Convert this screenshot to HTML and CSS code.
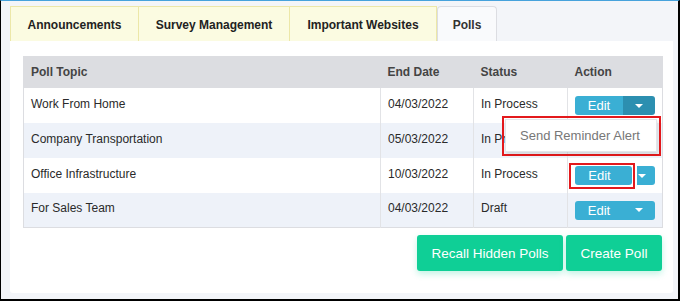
FILE: index.html
```html
<!DOCTYPE html>
<html>
<head>
<meta charset="utf-8">
<link rel="stylesheet" href="styles.css">
</head>
<body>
<div class="frame">
  <div class="tabs">
    <div class="tab t1">Announcements</div>
    <div class="tab t2">Survey Management</div>
    <div class="tab t3">Important Websites</div>
    <div class="tab active t4">Polls</div>
  </div>
  <div class="panel">
    <table class="polls">
      <colgroup>
        <col class="c1"><col class="c2"><col class="c3"><col class="c4">
      </colgroup>
      <thead>
        <tr><th>Poll Topic</th><th>End Date</th><th>Status</th><th>Action</th></tr>
      </thead>
      <tbody>
        <tr>
          <td>Work From Home</td><td>04/03/2022</td><td>In Process</td>
          <td class="act">
            <div class="split"><span class="edit">Edit</span><span class="caret open"><i></i></span></div>
            <div class="menu-box"><div class="menu">Send Reminder Alert</div></div>
          </td>
        </tr>
        <tr class="alt">
          <td>Company Transportation</td><td>05/03/2022</td><td>In Process</td>
          <td class="act">
            <div class="split"><span class="edit">Edit</span><span class="caret"><i></i></span></div>
          </td>
        </tr>
        <tr>
          <td>Office Infrastructure</td><td>10/03/2022</td><td>In Process</td>
          <td class="act">
            <div class="split wide"><span class="edit hl">Edit<b class="redbox"></b></span><span class="caret narrow"><i></i></span></div>
          </td>
        </tr>
        <tr class="alt">
          <td>For Sales Team</td><td>04/03/2022</td><td>Draft</td>
          <td class="act">
            <div class="split"><span class="edit">Edit</span><span class="caret"><i></i></span></div>
          </td>
        </tr>
      </tbody>
    </table>
    <div class="actions">
      <button class="btn recall">Recall Hidden Polls</button>
      <button class="btn create">Create Poll</button>
    </div>
  </div>
</div>
</body>
</html>
```
FILE: styles.css
```css
* { box-sizing: border-box; }
html, body { margin: 0; padding: 0; }
body { font-family: "Liberation Sans", Arial, sans-serif; background: #fff; }

.frame {
  width: 680px;
  height: 301px;
  background: #f3f5f9;
  border-top: 1px solid #46a2dc;
  border-left: 1px solid #000;
  border-right: 2px solid #000;
  border-bottom: 2px solid #000;
  padding: 5px 5px 0 9px;
  overflow: hidden;
}

.tabs { display: flex; height: 35px; }
.tab {
  display: flex;
  align-items: center;
  justify-content: center;
  font-size: 12px;
  font-weight: bold;
  color: #222;
  background: #fbfbe1;
  border: 1px solid #ece7a8;
  border-bottom: none;
  padding-top: 1px;
}
.tab + .tab { border-left: none; }
.t1 { width: 129px; }
.t2 { width: 151px; }
.t3 { width: 147px; }
.t4 { width: 60px; }
.tab.active {
  background: #f9fafc;
  border: 1px solid #dcdde2;
  border-bottom: none;
  border-radius: 4px 4px 0 0;
  color: #333;
}

.panel {
  background: #fff;
  height: 252px;
  border-radius: 0 0 3px 3px;
  padding: 15px 11px 0 13px;
}

.polls {
  width: 639px;
  border-collapse: collapse;
  table-layout: fixed;
  font-size: 12px;
  color: #2a2a2a;
  border: 1px solid #dcdde1;
}
.c1 { width: 357px; }
.c2 { width: 93px; }
.c3 { width: 94px; }
.c4 { width: 95px; }

.polls th {
  background: #dcdde1;
  height: 31px;
  text-align: left;
  font-weight: bold;
  color: #444;
  padding: 0 7px;
}
.polls td {
  height: 35px;
  padding: 0 7px 3px 7px;
  border-left: 1px solid #e2e3e6;
  vertical-align: middle;
}
.polls td:first-child { border-left: none; }
.polls tr.alt td { background: #eef2f9; }
.polls td.act { position: relative; padding: 0 0 0 7px; }

.split {
  display: flex;
  height: 19px;
  width: 80px;
  margin-top: 1px;
}
.edit {
  position: relative;
  width: 48px;
  background: #3aafd4;
  color: #fff;
  font-size: 13px;
  display: flex;
  align-items: center;
  justify-content: center;
  border-radius: 3px 0 0 3px;
}
.caret {
  width: 32px;
  background: #3aafd4;
  display: flex;
  align-items: center;
  justify-content: center;
  border-radius: 0 3px 3px 0;
}
.caret.open { background: #2c8fb0; }
.caret i {
  width: 0; height: 0;
  border-left: 4px solid transparent;
  border-right: 4px solid transparent;
  border-top: 4px solid #fff;
}
.split.wide .edit { width: 57px; border-radius: 3px; margin-right: 5px; padding-right: 8px; }
.split.wide .caret.narrow { width: 18px; }
.split.wide .caret.narrow i { margin-left: -8px; }
.redbox {
  position: absolute;
  left: -6px;
  top: -3px;
  width: 66px;
  height: 26px;
  border: 2px solid #e3191c;
}

.menu-box {
  position: absolute;
  left: -66px;
  top: 28px;
  width: 159px;
  height: 40px;
  border: 2px solid #e3191c;
  padding: 1px 2px 2px 1px;
  z-index: 2;
}
.menu {
  height: 100%;
  background: #fff;
  border: 1px solid #e4e6ea;
  box-shadow: 1px 2px 3px rgba(0,0,0,0.12);
  color: #777;
  font-size: 13px;
  display: flex;
  align-items: center;
  padding-left: 14px;
}

.actions {
  display: flex;
  justify-content: flex-end;
  gap: 3px;
  margin-top: 7px;
}
.btn {
  height: 36px;
  border: none;
  border-radius: 3px;
  background: #0fcf96;
  color: #fff;
  font-family: "Liberation Sans", Arial, sans-serif;
  font-size: 13.5px;
  padding: 0;
  box-shadow: 0 3px 6px rgba(15, 207, 150, 0.25);
}
.recall { width: 146px; }
.create { width: 96px; }
```
